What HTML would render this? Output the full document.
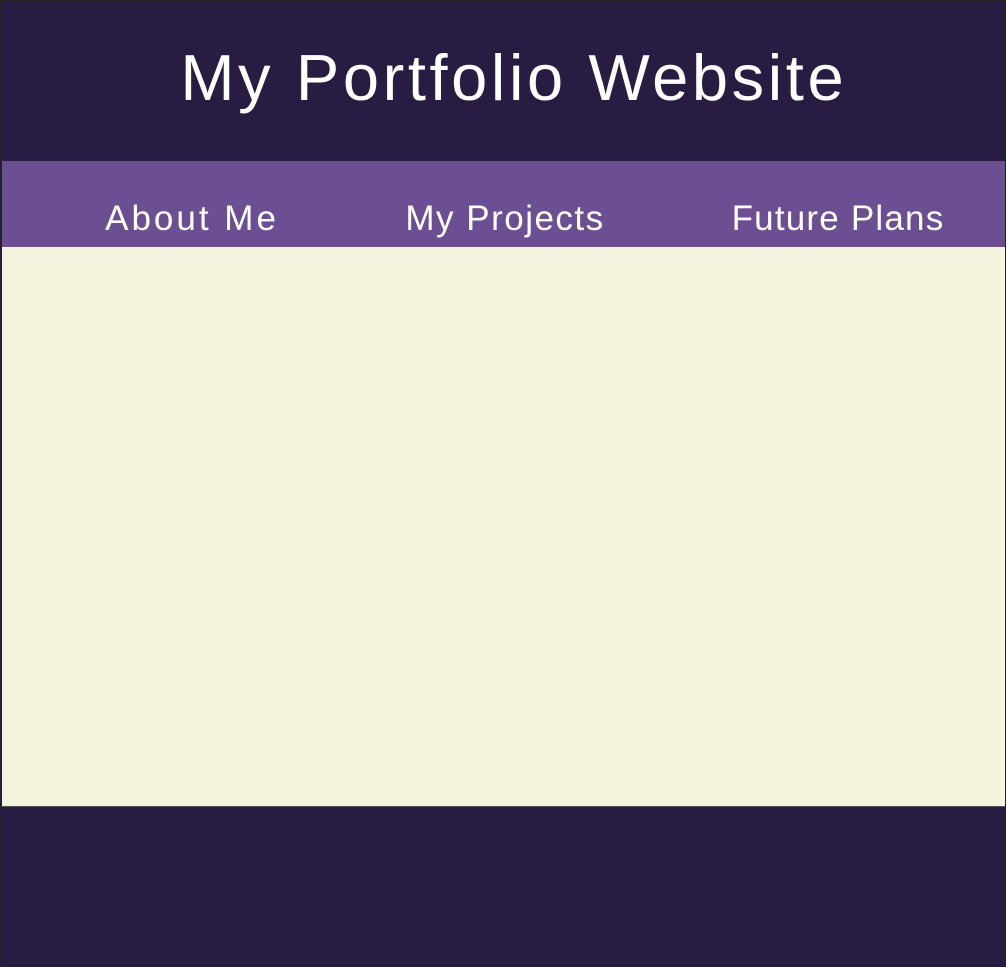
<!DOCTYPE html>
<html><head><meta charset="utf-8"><style>
html,body{margin:0;padding:0;}
body{width:1006px;height:966px;position:relative;overflow:hidden;background:#281c42;font-family:"Liberation Sans",sans-serif;color:#fff;}
.frame{position:absolute;left:0;top:0;width:1004px;height:964px;border:1px solid #222;}
.hdr{position:absolute;left:1px;top:0;width:1005px;height:161px;background:#281c42;}
.hdr h1{margin:0;position:absolute;left:17px;right:0;top:38px;text-align:center;font-weight:normal;font-size:65px;line-height:80px;letter-spacing:3.6px;text-indent:3.6px;}
.nav{position:absolute;left:2px;top:161px;width:1004px;height:86px;background:#6c4f93;}
.nav span{position:absolute;top:38px;font-size:35px;line-height:40px;transform:translateX(-50%);white-space:nowrap;letter-spacing:1.5px;}
.main{position:absolute;left:2px;top:247px;width:1004px;height:559px;background:#f4f4de;}
.foot{position:absolute;left:1px;top:806px;width:1005px;height:160px;background:#281c42;border-top:1px solid #555;}
</style></head><body>
<div class="hdr"><h1>My Portfolio Website</h1></div>
<div class="nav"><span style="left:190px;letter-spacing:3px">About Me</span><span style="left:503px">My Projects</span><span style="left:836px;letter-spacing:1.2px">Future Plans</span></div>
<div class="main"></div>
<div class="foot"></div>
<div class="frame"></div>
</body></html>
